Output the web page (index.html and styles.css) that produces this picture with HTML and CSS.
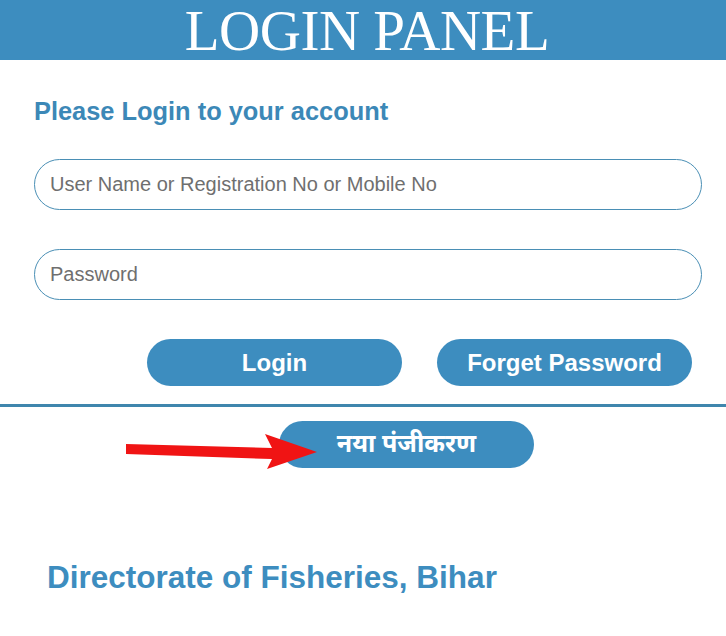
FILE: index.html
```html
<!DOCTYPE html>
<html>
<head>
<meta charset="utf-8">
<link rel="stylesheet" href="styles.css">
</head>
<body>
<div class="page">
  <header class="banner"><h1>LOGIN PANEL</h1></header>
  <section class="form">
    <h2>Please Login to your account</h2>
    <div class="field"><input type="text" placeholder="User Name or Registration No or Mobile No"></div>
    <div class="field"><input type="password" placeholder="Password"></div>
    <div class="actions">
      <button class="btn">Login</button>
      <button class="btn">Forget Password</button>
    </div>
  </section>
  <hr class="rule">
  <div class="register">
    <button class="btn reg">नया पंजीकरण</button>
    <svg class="arrow" width="200" height="44" viewBox="0 0 200 44">
      <path d="M0 14 L146 18 L139 4 L191 22 L141 39 L146 29 L0 24 Z" fill="#f01414"/>
    </svg>
  </div>
  <p class="footer">Directorate of Fisheries, Bihar</p>
</div>
</body>
</html>
```
FILE: styles.css
```css
html, body { margin: 0; padding: 0; background: #fff; }
.page { width: 726px; height: 636px; overflow: hidden; font-family: "Liberation Sans", Arial, sans-serif; }
.banner { height: 60px; background: #3d8dbf; display: flex; justify-content: center; align-items: center; padding-left: 8px; box-sizing: border-box; }
.banner h1 { margin: 0; font-family: "Liberation Serif", serif; font-weight: normal; color: #fff; font-size: 57px; letter-spacing: -0.5px; line-height: 60px; padding-top: 2px; }
.form { padding: 36px 24px 0 34px; }
.form h2 { margin: 0; color: #3c88b7; font-size: 25.4px; font-weight: bold; line-height: 30px; }
.field { margin-top: 33px; }
.field + .field { margin-top: 39px; }
.field input { box-sizing: border-box; width: 668px; height: 51px; border: 1px solid #4a8fb5; border-radius: 26px; padding: 0 15px; font-family: "Liberation Sans", Arial, sans-serif; font-size: 20px; color: #333; outline: none; background: #fff; }
.field input::placeholder { color: #6f6f6f; }
.actions { display: flex; gap: 35px; margin-top: 39px; padding-left: 113px; }
.btn { width: 255px; height: 47px; border: none; border-radius: 24px; background: #3d8dbf; color: #fff; font-family: "Liberation Sans", Arial, sans-serif; font-weight: bold; font-size: 24px; padding: 0; }
.rule { margin: 18px 0 0; border: none; height: 3px; background: #3f86ad; }
.register { position: relative; height: 62px; padding-top: 14px; padding-left: 279px; box-sizing: border-box; }
.btn.reg { display: block; height: 47px; font-family: "Noto Sans", "Liberation Sans", sans-serif; font-size: 25px; line-height: 40px; padding-bottom: 6px; }
.arrow { position: absolute; left: 126px; top: 23px; }
.footer { margin: 90px 0 0 47px; color: #3d8dbf; font-weight: bold; font-size: 31.5px; line-height: 36px; }
```
